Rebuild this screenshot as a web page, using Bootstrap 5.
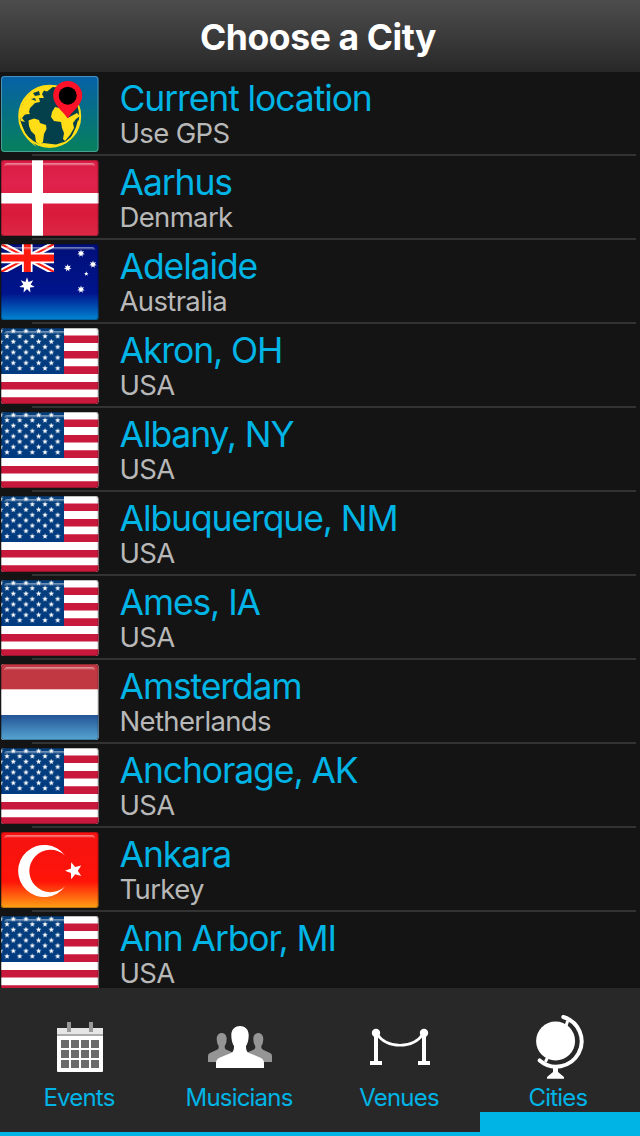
<!DOCTYPE html>
<html lang="en">
<head>
    <meta charset="UTF-8">
    <meta name="viewport" content="width=device-width, initial-scale=1.0">
    <title>Choose a City</title>
    <link href="https://cdn.jsdelivr.net/npm/bootstrap@5.3.0/dist/css/bootstrap.min.css" rel="stylesheet">
    <style>
        body { background: #141414; font-family: Inter, "Liberation Sans", sans-serif; }
        .app { height: 1136px; }
        .top-bar { height: 72px; flex: none; background: linear-gradient(#4d4d4d, #282828); }
        .top-bar h1 { font-size: 35.5px; line-height: 40px; letter-spacing: -0.4px; padding-top: 4px; margin-right: 4px !important; }
        .city-list { min-height: 0; }
        .city { height: 84px; flex: none; }
        .city::after { content: ""; display: block; height: 2px; margin: 0 4px 0 32px; background: #333; }
        .city-body { height: 82px; padding-left: 1px; }
        .flag { width: 98px; height: 76px; margin: 4px 20px 0 0; flex: none; }
        .city-name { font-size: 35.5px; line-height: 40px; letter-spacing: -1.1px; color: #00b4e6; padding: 7px 0 0 0.5px; }
        .city-country { font-size: 27.5px; line-height: 28px; letter-spacing: -0.65px; color: #b8b8b8; padding-left: 0.5px; }
        .tab-bar { height: 148px; background: #282828; flex: none; }
        .tab { color: #00b4e6; font-size: 24px; line-height: 28px; letter-spacing: -0.8px; border-bottom: 4px solid #00b4e6; padding-top: 22px; }
        .tab.active { border-bottom-width: 24px; }
        .tab svg { width: 80px; height: 72px; }
        .tab span { padding-top: 2px; padding-right: 2px; }
        .tab.active span { padding-right: 4px; }
    </style>
</head>
<body>
    <!-- flags shared by the rows -->
    <svg width="0" height="0" class="position-absolute">
        <defs>
            <clipPath id="round"><rect width="97.5" height="76" rx="3"/></clipPath>
            <linearGradient id="gGps" x2="0" y2="1"><stop stop-color="#0661a8"/><stop offset="1" stop-color="#07805c"/></linearGradient>
            <linearGradient id="gDk" x2="0" y2="1"><stop stop-color="#d91c42"/><stop offset=".3" stop-color="#e0234c"/><stop offset=".7" stop-color="#d91a3a"/><stop offset="1" stop-color="#dd2846"/></linearGradient>
            <linearGradient id="gAu" x2="0" y2="1"><stop stop-color="#000f78"/><stop offset=".65" stop-color="#00148c"/><stop offset="1" stop-color="#0086d2"/></linearGradient>
            <linearGradient id="gUs" x2="0" y2="1"><stop stop-color="#063f7c"/><stop offset="1" stop-color="#003a80"/></linearGradient>
            <linearGradient id="gNl" x2="0" y2="1"><stop stop-color="#245496"/><stop offset="1" stop-color="#56a6d2"/></linearGradient>
            <linearGradient id="gTr" x2="0" y2="1"><stop stop-color="#f41212"/><stop offset=".65" stop-color="#ff1408"/><stop offset="1" stop-color="#ffa214"/></linearGradient>
            <linearGradient id="shine" x2="0" y2="1"><stop stop-color="#fff" stop-opacity=".5"/><stop offset="1" stop-color="#fff" stop-opacity="0"/></linearGradient>
            <path id="star5" d="M0-1 .25-.34.95-.31.4.13.59.81 0 .42-.59.81-.4.13-.95-.31-.25-.34z"/>
            <path id="star7" d="M0-1 .2-.42.78-.62.46-.1.97.22.37.29.43.9 0 .47-.43.9-.37.29-.97.22-.46-.1-.78-.62-.2-.42z"/>
            <pattern id="starfield" x="3" y=".33" width="12.67" height="10.67" patternUnits="userSpaceOnUse">
                <use href="#star5" transform="translate(9.3 2.67) scale(2.9)" fill="#fff"/>
                <use href="#star5" transform="translate(3 8) scale(2.9)" fill="#fff"/>
            </pattern>
        </defs>
        <symbol id="edge" viewBox="0 0 98 76">
            <path d="M3 7V5.500Q3.500 3 6 3H91Q94 3 94.500 7Q94 5.500 91 5.500H6Q4 5.500 3 7z" fill="url(#shine)"/>
            <rect x=".5" y=".5" width="96.500" height="75" rx="3" fill="none" stroke="#000" stroke-opacity=".25"/>
        </symbol>
        <symbol id="gps" viewBox="0 0 98 76">
            <g clip-path="url(#round)">
                <rect width="98" height="76" fill="url(#gGps)"/>
                <circle cx="48.700" cy="40.300" r="30.500" fill="#043f4c" stroke="#ffde17" stroke-width="2"/>
                <path d="M18.500 39Q20 25 31 16Q40 9 53 10L46 15.500 43 14.500 41 18 43 22 38 22 39 26 34 27 29 32 28 36 29 38 24 38.500 21 42 24 46 20 45z" fill="#ffde17"/>
                <path d="M32 17 38 15 39 19 34 20zM30 23 34 22 35 25z" fill="#043f4c"/>
                <path d="M27.500 44.500 33 42.500 38 44 39 47 45 49 45.500 53 43 58 42 66 39 69 35 66 34 59 30 55 28 50z" fill="#ffde17"/>
                <path d="M20 47 25 59 33 68 36 71Q21 62 18 44z" fill="#ffde17"/>
                <path d="M54 31 62 33 66.700 42 76 37 79 40 75 43 72 47 73 52 69 59 64 65 62 63 63 57 61 52 60 46 53 45 50 41 51 36z" fill="#ffde17"/>
                <path d="M75 51 77 44 79 46 76 56 69 64z" fill="#ffde17"/>
                <path d="M36 69 42 67 55 68.500 63 66 61 69Q49 74 36 69z" fill="#ffde17"/>
            </g>
            <path d="M66.700 42.500C62 35 52.200 29 52.200 19.500a14.500 14.500 0 0 1 29 0C81.200 29 71.500 35 66.700 42.500z" fill="#ff1228"/>
            <circle cx="66.700" cy="19.700" r="9"/>
            <rect x=".5" y=".5" width="96.500" height="75" rx="3" fill="none" stroke="#8cbfd0" stroke-opacity=".5"/>
        </symbol>
        <symbol id="dk" viewBox="0 0 98 76">
            <g clip-path="url(#round)">
                <rect width="98" height="76" fill="url(#gDk)"/>
                <path d="M31 0H42V33H98V43.500H42V76H31V43.500H0V33H31z" fill="#fff"/>
            </g>
            <use href="#edge"/>
        </symbol>
        <symbol id="au" viewBox="0 0 98 76">
            <g clip-path="url(#round)">
                <rect width="98" height="76" fill="url(#gAu)"/>
                <svg width="53" height="28" viewBox="0 0 53 28" preserveAspectRatio="none">
                    <path d="M0 0 53 28M53 0 0 28" stroke="#fff" stroke-width="6"/>
                    <path d="M0 0 53 28M53 0 0 28" stroke="#ff1a10" stroke-width="2"/>
                    <path d="M26.300 0V28M0 14H53" stroke="#fff" stroke-width="10.500"/>
                    <path d="M26.300 0V28M0 14H53" stroke="#ff1a10" stroke-width="7"/>
                </svg>
                <g fill="#fff">
                    <use href="#star7" transform="translate(26 41.300) scale(8)"/>
                    <use href="#star7" transform="translate(80 9.300) scale(3.900)"/>
                    <use href="#star7" transform="translate(66.700 24) scale(3.900)"/>
                    <use href="#star7" transform="translate(92 20.300) scale(3.900)"/>
                    <use href="#star5" transform="translate(85.300 29.700) scale(2.400)"/>
                    <use href="#star7" transform="translate(80 45.300) scale(3.900)"/>
                </g>
            </g>
            <use href="#edge"/>
        </symbol>
        <symbol id="us" viewBox="0 0 98 76">
            <g clip-path="url(#round)">
                <rect width="98" height="76" fill="#fff"/>
                <path d="M0 7.500H98V15H0zM0 23H98V30.500H0zM0 38.300H98V46H0zM0 54H98V61.500H0zM0 69.300H98V76H0z" fill="#c8193c"/>
                <rect width="63" height="46" fill="url(#gUs)"/>
                <rect width="60" height="43" fill="url(#starfield)"/>
            </g>
            <use href="#edge"/>
        </symbol>
        <symbol id="nl" viewBox="0 0 98 76">
            <g clip-path="url(#round)">
                <rect width="98" height="76" fill="#fff"/>
                <rect width="98" height="25.300" fill="#c23842"/>
                <rect y="51" width="98" height="25" fill="url(#gNl)"/>
            </g>
            <use href="#edge"/>
        </symbol>
        <symbol id="tr" viewBox="0 0 98 76">
            <g clip-path="url(#round)">
                <rect width="98" height="76" fill="url(#gTr)"/>
                <path d="M64 23.500A26 26 0 1 0 64 54.500A21.200 21.200 0 1 1 64 23.500z" fill="#fff"/>
                <use href="#star5" transform="translate(73 38.700) rotate(-90) scale(9)" fill="#fff"/>
            </g>
            <use href="#edge"/>
        </symbol>
    </svg>

    <div class="app d-flex flex-column overflow-hidden">
        <header class="top-bar d-flex align-items-center justify-content-center">
            <h1 class="text-white fw-bold m-0">Choose a City</h1>
        </header>

        <main class="city-list flex-grow-1 overflow-hidden d-flex flex-column">
            <div class="city"><div class="city-body d-flex"><svg class="flag"><use href="#gps"/></svg><div><div class="city-name">Current location</div><div class="city-country">Use GPS</div></div></div></div>
            <div class="city"><div class="city-body d-flex"><svg class="flag"><use href="#dk"/></svg><div><div class="city-name">Aarhus</div><div class="city-country">Denmark</div></div></div></div>
            <div class="city"><div class="city-body d-flex"><svg class="flag"><use href="#au"/></svg><div><div class="city-name">Adelaide</div><div class="city-country">Australia</div></div></div></div>
            <div class="city"><div class="city-body d-flex"><svg class="flag"><use href="#us"/></svg><div><div class="city-name">Akron, OH</div><div class="city-country">USA</div></div></div></div>
            <div class="city"><div class="city-body d-flex"><svg class="flag"><use href="#us"/></svg><div><div class="city-name">Albany, NY</div><div class="city-country">USA</div></div></div></div>
            <div class="city"><div class="city-body d-flex"><svg class="flag"><use href="#us"/></svg><div><div class="city-name">Albuquerque, NM</div><div class="city-country">USA</div></div></div></div>
            <div class="city"><div class="city-body d-flex"><svg class="flag"><use href="#us"/></svg><div><div class="city-name">Ames, IA</div><div class="city-country">USA</div></div></div></div>
            <div class="city"><div class="city-body d-flex"><svg class="flag"><use href="#nl"/></svg><div><div class="city-name">Amsterdam</div><div class="city-country">Netherlands</div></div></div></div>
            <div class="city"><div class="city-body d-flex"><svg class="flag"><use href="#us"/></svg><div><div class="city-name">Anchorage, AK</div><div class="city-country">USA</div></div></div></div>
            <div class="city"><div class="city-body d-flex"><svg class="flag"><use href="#tr"/></svg><div><div class="city-name">Ankara</div><div class="city-country">Turkey</div></div></div></div>
            <div class="city"><div class="city-body d-flex"><svg class="flag"><use href="#us"/></svg><div><div class="city-name">Ann Arbor, MI</div><div class="city-country">USA</div></div></div></div>
        </main>

        <nav class="tab-bar row g-0 text-center">
            <div class="tab col-3 d-flex flex-column align-items-center">
                <svg viewBox="0 0 80 72">
                    <rect x="17" y="18" width="46" height="44" rx="1" fill="#fff"/>
                    <path d="M17 18H63V24H17z" fill="#e6e6e6"/>
                    <path d="M17 24H63V26H17z" fill="#aaa"/>
                    <path d="M27 12h4v10h-4zM49 12h4v10h-4z" fill="#999"/>
                    <path d="M21 30h8v8h-8zm10 0h8v8h-8zm10 0h8v8h-8zm10 0h8v8h-8zM21 40h8v8h-8zm10 0h8v8h-8zm10 0h8v8h-8zm10 0h8v8h-8zM21 50h8v8h-8zm10 0h8v8h-8zm10 0h8v8h-8zm10 0h8v8h-8z" fill="#6b6b6b"/>
                </svg>
                <span>Events</span>
            </div>
            <div class="tab col-3 d-flex flex-column align-items-center">
                <svg viewBox="0 0 80 72">
                    <g fill="#959595">
                        <path id="person" d="M8 52V46Q8 43.500 10 43L16.500 40Q19 39 18.800 36.500Q16.700 34 16.700 29C16.700 21 26.700 21 26.700 29Q26.700 34 24.600 36.500Q24.500 39 27 40L34 43V52z"/>
                        <use href="#person" transform="matrix(-1 0 0 1 80 0)"/>
                    </g>
                    <path d="M16 58V53Q16 49 20 47.500L31 43Q34.200 41.500 34 36Q31.300 32 31.300 25C31.300 13 48.700 13 48.700 25Q48.700 32 46 36Q45.800 41.500 49 43L60 47.500Q64 49 64 53V58z" fill="#fff"/>
                </svg>
                <span>Musicians</span>
            </div>
            <div class="tab col-3 d-flex flex-column align-items-center">
                <svg viewBox="0 0 80 72">
                    <g fill="#fff">
                        <circle cx="16" cy="23" r="4.200"/><circle cx="64" cy="23" r="4.200"/>
                        <path d="M14 23h4v28h4v4H10v-4h4zM62 23h4v28h4v4H58v-4h4z"/>
                    </g>
                    <path d="M17 24C27 39 53 39 63 24" fill="none" stroke="#fff" stroke-width="2.600"/>
                </svg>
                <span>Venues</span>
            </div>
            <div class="tab active col-3 d-flex flex-column align-items-center">
                <svg viewBox="0 0 80 72">
                    <circle cx="35.600" cy="31" r="19.500" fill="#fff"/>
                    <path d="M43.300 7A25.300 25.300 0 1 1 19.700 50.400" fill="none" stroke="#fff" stroke-width="4" stroke-linecap="round"/>
                    <path d="M46 16 47.700 10.700M25.300 52 27.700 47.300" stroke="#fff" stroke-width="3"/>
                    <path d="M33 56h5v6l6 5v1.800H27V67l6-5z" fill="#fff"/>
                </svg>
                <span>Cities</span>
            </div>
        </nav>
    </div>
    <script src="https://cdn.jsdelivr.net/npm/bootstrap@5.3.0/dist/js/bootstrap.bundle.min.js"></script>
</body>
</html>
